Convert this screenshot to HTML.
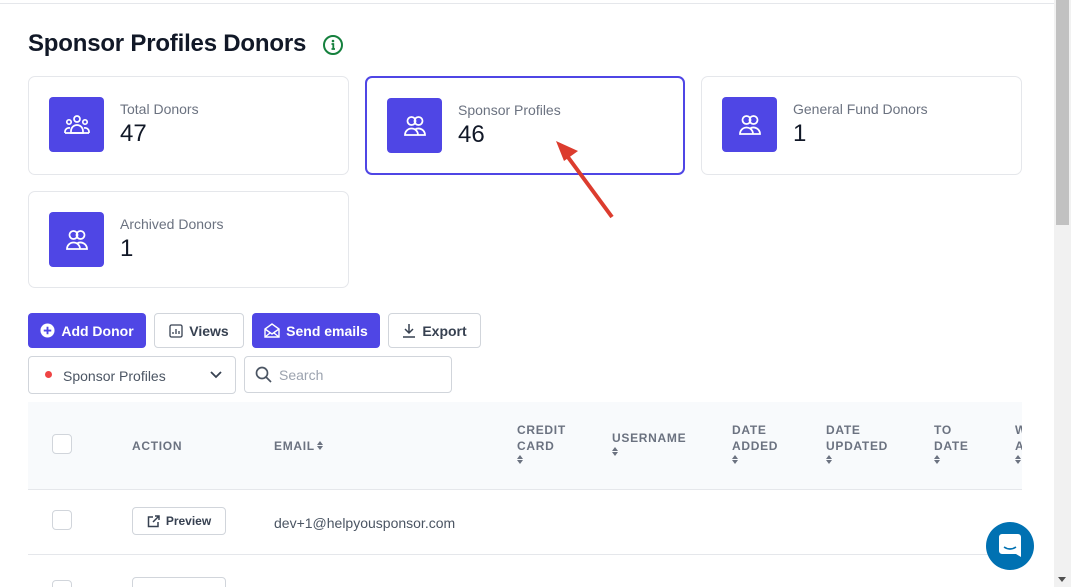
<!DOCTYPE html>
<html><head><meta charset="utf-8"><style>
*{box-sizing:border-box;margin:0;padding:0}
html,body{width:1071px;height:587px;overflow:hidden}
body{background:#fff;font-family:"Liberation Sans",sans-serif;position:relative;color:#111827}
.a{position:absolute}
.card{position:absolute;border:1px solid #e5e7eb;border-radius:7px;background:#fff}
.ic{position:absolute;width:55px;height:55px;background:#4f46e5;border-radius:4px;display:flex;align-items:center;justify-content:center}
.lbl{position:absolute;font-size:14px;color:#6b7280}
.num{position:absolute;font-size:24px;color:#111827}
.btn{position:absolute;top:313px;height:35px;border-radius:4px;font-size:14px;font-weight:bold;display:flex;align-items:center;justify-content:center;gap:6px}
.p{background:#4f46e5;color:#fff}
.o{background:#fff;border:1px solid #d1d5db;color:#374151}
.th{position:absolute;font-size:12px;font-weight:bold;color:#6b7280;letter-spacing:.7px;line-height:16px}
.cb{position:absolute;width:20px;height:20px;border:1px solid #d1d5db;border-radius:4px;background:#fff;left:52px}
.s{display:block;width:7px;height:10px;position:relative;margin-top:1px}
.s:before,.s:after{content:"";position:absolute;left:0;border-left:3.5px solid transparent;border-right:3.5px solid transparent}
.s:before{top:0;border-bottom:4px solid #6b7280}
.s:after{top:5px;border-top:4px solid #6b7280}
.si{display:inline-block;vertical-align:-1px;margin-left:2px}
</style></head><body>
<div class="a" style="left:0;top:3px;width:1054px;height:1px;background:#e5e7eb"></div>
<div class="a" style="left:1054px;top:0;width:17px;height:587px;background:#f1f1f1"></div>
<div class="a" style="left:1056px;top:0;width:13px;height:225px;background:#c1c1c1"></div>
<div class="a" style="left:1058px;top:577px;width:0;height:0;border-left:4px solid transparent;border-right:4px solid transparent;border-top:5px solid #505050"></div>

<div class="a" style="left:28px;top:30px;font-size:24px;font-weight:bold;color:#111827;letter-spacing:-0.2px">Sponsor Profiles Donors</div>
<svg class="a" style="left:322px;top:34px" width="22" height="22" viewBox="0 0 22 22"><circle cx="11" cy="11" r="9" fill="none" stroke="#15803d" stroke-width="2"/><circle cx="11" cy="7" r="1.3" fill="#15803d"/><path d="M9.5 10h1.8v5M9.5 15h3.5" stroke="#15803d" stroke-width="1.8" fill="none"/></svg>

<div class="card" style="left:28px;top:76px;width:321px;height:99px"></div>
<div class="card" style="left:365px;top:76px;width:320px;height:99px;border:2px solid #4f46e5"></div>
<div class="card" style="left:701px;top:76px;width:321px;height:99px"></div>
<div class="card" style="left:28px;top:191px;width:321px;height:97px"></div>

<div class="ic" style="left:49px;top:97px"><svg width="26" height="22" viewBox="0 0 26 22" fill="none" stroke="#fff" stroke-width="1.7"><circle cx="13" cy="5" r="3"/><circle cx="5" cy="8" r="2.2"/><circle cx="21" cy="8" r="2.2"/><path d="M7 19v-2a6 6 0 0 1 12 0v2z"/><path d="M1 19v-1.5a4 4 0 0 1 5-3.5M25 19v-1.5a4 4 0 0 0-5-3.5M1 19h24"/></svg></div>
<div class="ic" style="left:387px;top:98px"><svg width="24" height="22" viewBox="0 0 24 22" fill="none" stroke="#fff" stroke-width="1.8"><circle cx="8.5" cy="6" r="4"/><circle cx="15.5" cy="6" r="4"/><path d="M2 20a6.5 6.5 0 0 1 13 0zM12 14.5a6.5 6.5 0 0 1 10 5.5h-7"/></svg></div>
<div class="ic" style="left:722px;top:97px"><svg width="24" height="22" viewBox="0 0 24 22" fill="none" stroke="#fff" stroke-width="1.8"><circle cx="8.5" cy="6" r="4"/><circle cx="15.5" cy="6" r="4"/><path d="M2 20a6.5 6.5 0 0 1 13 0zM12 14.5a6.5 6.5 0 0 1 10 5.5h-7"/></svg></div>
<div class="ic" style="left:49px;top:212px"><svg width="24" height="22" viewBox="0 0 24 22" fill="none" stroke="#fff" stroke-width="1.8"><circle cx="8.5" cy="6" r="4"/><circle cx="15.5" cy="6" r="4"/><path d="M2 20a6.5 6.5 0 0 1 13 0zM12 14.5a6.5 6.5 0 0 1 10 5.5h-7"/></svg></div>

<div class="lbl" style="left:120px;top:101px">Total Donors</div><div class="num" style="left:120px;top:120px">47</div>
<div class="lbl" style="left:458px;top:102px">Sponsor Profiles</div><div class="num" style="left:458px;top:121px">46</div>
<div class="lbl" style="left:793px;top:101px">General Fund Donors</div><div class="num" style="left:793px;top:120px">1</div>
<div class="lbl" style="left:120px;top:216px">Archived Donors</div><div class="num" style="left:120px;top:235px">1</div>

<svg class="a" style="left:550px;top:135px" width="70" height="90"><path d="M62 82L12 14" stroke="#dc3c2e" stroke-width="4" fill="none"/><path d="M6 6L28 16L14 26z" fill="#dc3c2e"/></svg>

<div class="btn p" style="left:28px;width:118px"><svg width="15" height="15" viewBox="0 0 16 16"><circle cx="8" cy="8" r="7.5" fill="#fff"/><path d="M8 4v8M4 8h8" stroke="#4f46e5" stroke-width="2"/></svg>Add Donor</div>
<div class="btn o" style="left:154px;width:90px;font-size:14px"><svg width="14" height="14" viewBox="0 0 14 14" fill="none" stroke="#374151" stroke-width="1.3"><rect x="1" y="1" width="12" height="12" rx="1.5"/><path d="M4 10V8M7 10V5M10 10V7"/></svg>Views</div>
<div class="btn p" style="left:252px;width:128px"><svg width="16" height="15" viewBox="0 0 16 15" fill="none" stroke="#fff" stroke-width="1.4"><path d="M1 6v8h14V6L8 1z"/><path d="M1 6l7 5 7-5M1 14l5-4M15 14l-5-4"/></svg>Send emails</div>
<div class="btn o" style="left:388px;width:93px;font-size:14px"><svg width="14" height="15" viewBox="0 0 14 15" fill="none" stroke="#374151" stroke-width="1.5"><path d="M7 1v9M3 6l4 4 4-4M1 14h12"/></svg>Export</div>

<div class="a" style="left:28px;top:356px;width:208px;height:38px;border:1px solid #d1d5db;border-radius:4px"></div>
<div class="a" style="left:45px;top:371px;width:7px;height:7px;border-radius:50%;background:#ef4444"></div>
<div class="a" style="left:63px;top:368px;font-size:14px;color:#4b5563">Sponsor Profiles</div>
<svg class="a" style="left:210px;top:371px" width="12" height="8"><path d="M1 1l5 5 5-5" stroke="#374151" stroke-width="1.8" fill="none"/></svg>
<div class="a" style="left:244px;top:356px;width:208px;height:37px;border:1px solid #d1d5db;border-radius:4px"></div>
<svg class="a" style="left:255px;top:366px" width="17" height="17" fill="none" stroke="#4b5563" stroke-width="1.7"><circle cx="7" cy="7" r="5.5"/><path d="M11 11l5 5"/></svg>
<div class="a" style="left:279px;top:367px;font-size:14px;color:#9ca3af">Search</div>

<div class="a" style="left:28px;top:402px;width:994px;height:88px;background:#f8fafc;border-bottom:1px solid #e5e7eb"></div>
<div class="cb" style="top:434px"></div>
<div class="th" style="left:132px;top:438px">ACTION</div>
<div class="th" style="left:274px;top:438px">EMAIL<span class="s si"></span></div>
<div class="th" style="left:517px;top:422px">CREDIT<br>CARD<span class="s"></span></div>
<div class="th" style="left:612px;top:430px">USERNAME<span class="s"></span></div>
<div class="th" style="left:732px;top:422px">DATE<br>ADDED<span class="s"></span></div>
<div class="th" style="left:826px;top:422px">DATE<br>UPDATED<span class="s"></span></div>
<div class="th" style="left:934px;top:422px">TO<br>DATE<span class="s"></span></div>
<div class="th" style="left:1015px;top:422px;width:7px;overflow:hidden">W<br>A<span class="s"></span></div>

<div class="cb" style="top:510px"></div>
<div class="a" style="left:132px;top:507px;width:94px;height:28px;border:1px solid #d1d5db;border-radius:4px;font-size:12px;font-weight:bold;color:#374151;display:flex;align-items:center;justify-content:center;gap:6px"><svg width="13" height="13" fill="none" stroke="#374151" stroke-width="1.5"><path d="M6 2H1.5v9.5H11V7M8 1h4v4M12 1L6 7"/></svg>Preview</div>
<div class="a" style="left:274px;top:515px;font-size:14px;color:#4b5563">dev+1@helpyousponsor.com</div>
<div class="a" style="left:28px;top:554px;width:994px;height:1px;background:#e5e7eb"></div>
<div class="cb" style="top:580px"></div>
<div class="a" style="left:132px;top:577px;width:94px;height:28px;border:1px solid #d1d5db;border-radius:4px"></div>

<div class="a" style="left:986px;top:522px;width:48px;height:48px;border-radius:50%;background:#0071b2"></div>
<svg class="a" style="left:998px;top:533px" width="24" height="26"><path d="M4 1h16a3 3 0 0 1 3 3v20l-5-3H4a3 3 0 0 1-3-3V4a3 3 0 0 1 3-3z" fill="#fff"/><path d="M6 14q6 4 12 0" stroke="#0071b2" stroke-width="1.6" fill="none"/></svg>
</body></html>
